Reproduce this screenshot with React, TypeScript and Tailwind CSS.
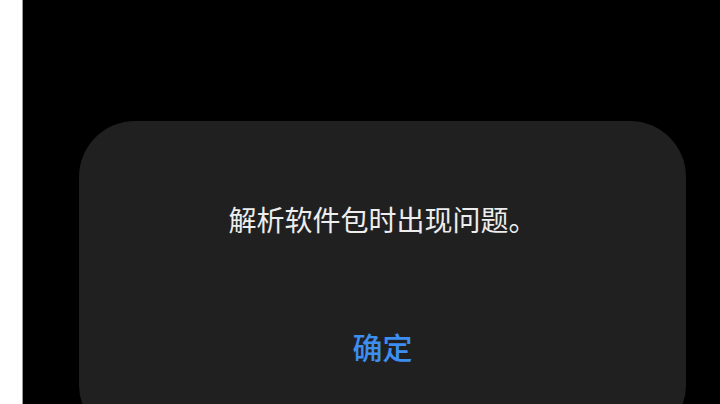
export default function App() {
  return (
    <div
      className="flex h-[404px] w-[720px] overflow-hidden bg-black"
      style={{ fontFamily: '"Noto Sans CJK SC", "Noto Sans", sans-serif' }}
    >
      {/* left sliver of the underlying page */}
      <div className="h-full w-[23px] shrink-0 border-r border-[#9c9c9c] bg-white" />

      <div className="flex-1 pl-[56px] pr-[34px] pt-[121px]">
        <div className="flex h-[320px] flex-col items-center rounded-[56px] bg-[#202020]">
          <p className="pt-[84px] text-[28px] leading-[28px] text-[#ededed]">
            解析软件包时出现问题。
          </p>
          <button className="mt-[98px] text-[30px] font-medium leading-[30px] text-[#3d8ef0]">
            确定
          </button>
        </div>
      </div>
    </div>
  );
}
